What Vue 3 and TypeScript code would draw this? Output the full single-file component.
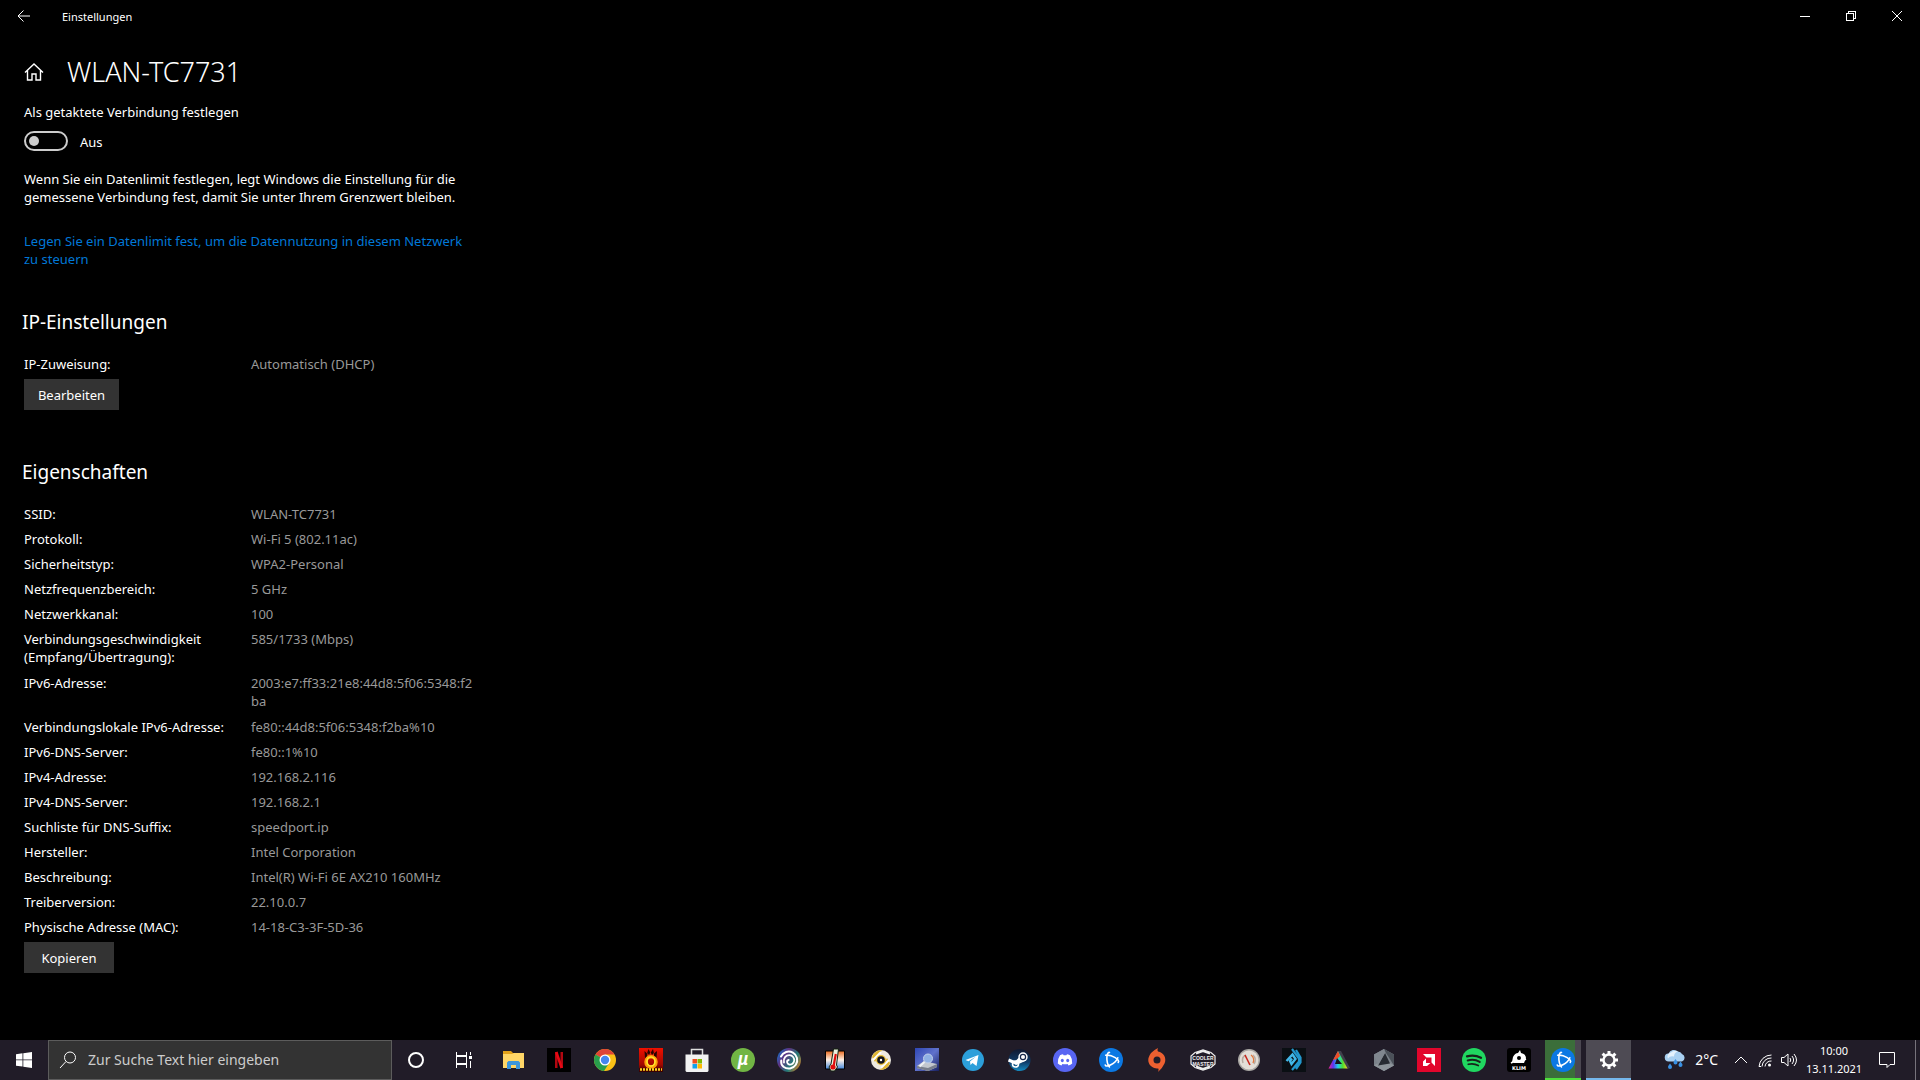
<script setup lang="ts">
import { ref } from 'vue'

interface Property {
  label: string
  value: string
  tall?: boolean
}

const metered = ref(false)
const query = ref('')

const properties: Property[] = [
  { label: 'SSID:', value: 'WLAN-TC7731' },
  { label: 'Protokoll:', value: 'Wi-Fi 5 (802.11ac)' },
  { label: 'Sicherheitstyp:', value: 'WPA2-Personal' },
  { label: 'Netzfrequenzbereich:', value: '5 GHz' },
  { label: 'Netzwerkkanal:', value: '100' },
  { label: 'Verbindungsgeschwindigkeit (Empfang/Übertragung):', value: '585/1733 (Mbps)', tall: true },
  { label: 'IPv6-Adresse:', value: '2003:e7:ff33:21e8:44d8:5f06:5348:f2ba', tall: true },
  { label: 'Verbindungslokale IPv6-Adresse:', value: 'fe80::44d8:5f06:5348:f2ba%10' },
  { label: 'IPv6-DNS-Server:', value: 'fe80::1%10' },
  { label: 'IPv4-Adresse:', value: '192.168.2.116' },
  { label: 'IPv4-DNS-Server:', value: '192.168.2.1' },
  { label: 'Suchliste für DNS-Suffix:', value: 'speedport.ip' },
  { label: 'Hersteller:', value: 'Intel Corporation' },
  { label: 'Beschreibung:', value: 'Intel(R) Wi-Fi 6E AX210 160MHz' },
  { label: 'Treiberversion:', value: '22.10.0.7' },
  { label: 'Physische Adresse (MAC):', value: '14-18-C3-3F-5D-36' },
]
</script>

<template>
  <div class="screen">
    <header class="titlebar">
      <button class="back" aria-label="Zurück">
        <svg width="14" height="14" viewBox="0 0 14 14" class="line"><path d="M13 7H1.500M6.500 1.500 1 7l5.500 5.500" /></svg>
      </button>
      <span class="app-name">Einstellungen</span>
      <div class="window-controls">
        <button aria-label="Minimieren">
          <svg width="10" height="10" viewBox="0 0 10 10" class="line crisp"><path d="M0 5.500h10" /></svg>
        </button>
        <button aria-label="Verkleinern">
          <svg width="10" height="10" viewBox="0 0 10 10" class="line crisp"><path d="M.5 2.500h7v7h-7zM2.500 2.500v-2h7v7h-2" /></svg>
        </button>
        <button aria-label="Schließen">
          <svg width="10" height="10" viewBox="0 0 10 10" class="line"><path d="M0 0 10 10M10 0 0 10" /></svg>
        </button>
      </div>
    </header>

    <main class="content">
      <div class="page-title">
        <button class="home" aria-label="Startseite">
          <svg width="20" height="20" viewBox="0 0 20 20" class="line home-icon"><path d="M1 10.500 10 2l9 8.500M3.500 8.500v9.500H8v-6h4v6h4.500V8.500" /></svg>
        </button>
        <h1>WLAN-TC7731</h1>
      </div>

      <p class="metered-label" id="metered-label">Als getaktete Verbindung festlegen</p>
      <label class="toggle">
        <input v-model="metered" type="checkbox" role="switch" aria-labelledby="metered-label" />
        <span>{{ metered ? 'Ein' : 'Aus' }}</span>
      </label>
      <p class="hint">Wenn Sie ein Datenlimit festlegen, legt Windows die Einstellung für die gemessene Verbindung fest, damit Sie unter Ihrem Grenzwert bleiben.</p>
      <a class="limit-link" href="#">Legen Sie ein Datenlimit fest, um die Datennutzung in diesem Netzwerk zu steuern</a>

      <section>
        <h2>IP-Einstellungen</h2>
        <table>
          <tbody>
            <tr>
              <th scope="row">IP-Zuweisung:</th>
              <td>Automatisch (DHCP)</td>
            </tr>
          </tbody>
        </table>
        <button class="action edit">Bearbeiten</button>
      </section>

      <section>
        <h2>Eigenschaften</h2>
        <table>
          <tbody>
            <tr v-for="p in properties" :key="p.label" :class="{ tall: p.tall }">
              <th scope="row">{{ p.label }}</th>
              <td>{{ p.value }}</td>
            </tr>
          </tbody>
        </table>
        <button class="action copy">Kopieren</button>
      </section>
    </main>

    <footer class="taskbar">
      <button class="system" aria-label="Start">
        <svg width="16" height="16" viewBox="0 0 16 16" fill="#fff"><path d="M0 2.200 6.500 1.300v6.200H0zM7.300 1.200 16 0v7.500H7.300zM0 8.300h6.500v6.200L0 13.700zM7.300 8.300H16V16l-8.700-1.200z" /></svg>
      </button>
      <label class="search">
        <svg width="18" height="18" viewBox="0 0 18 18" class="line"><circle cx="11" cy="6.500" r="5.500" /><path d="M7 10.500 1 17" /></svg>
        <input v-model="query" type="text" placeholder="Zur Suche Text hier eingeben" aria-label="Suche" />
      </label>
      <button class="system" aria-label="Cortana">
        <svg width="18" height="18" viewBox="0 0 18 18" fill="none" stroke="#fff" stroke-width="2"><circle cx="9" cy="9" r="7" /></svg>
      </button>
      <button class="system" aria-label="Aktive Anwendungen">
        <svg width="18" height="18" viewBox="0 0 18 18" class="line crisp"><path d="M1.500 1v3.500h10V1M1.500 17v-3.500h10V17M1.500 5.500h10v7h-10zM15.500 1v3M15.500 10v7" /><path d="M14 5h3v3h-3z" fill="#fff" stroke="none" /></svg>
      </button>

      <nav class="apps" aria-label="Angeheftete Apps">
        <button class="app" aria-label="Explorer">
          <svg width="24" height="24" viewBox="0 0 24 24"><path d="M2 3h8l2 2h11v3H2z" fill="#e3a21a" /><path d="M2 6h9l2-1h10v15H2z" fill="#ffd667" /><path d="M6 21v-6.500L7.500 13h10l1.500 1.500V21h-4v-4h-5v4z" fill="#3c96dc" /></svg>
        </button>
        <button class="app" aria-label="Netflix">
          <svg width="24" height="24" viewBox="0 0 24 24"><path d="M0 0h24v24H0z" fill="#000" /><rect x="8" y="4" width="2.500" height="16" fill="#b20710" /><rect x="13.500" y="4" width="2.500" height="16" fill="#b20710" /><line x1="9.300" y1="4" x2="14.700" y2="20" stroke="#e50914" stroke-width="2.600" /></svg>
        </button>
        <button class="app" aria-label="Chrome">
          <svg width="24" height="24" viewBox="0 0 24 24"><circle cx="12" cy="12" r="11" fill="#fbc116" /><path d="M12 12 2.500 6.500A11 11 0 0 1 21.500 6.500H12z" fill="#df4436" /><path d="M2.500 6.500A11 11 0 0 0 11 23l5.500-8.500L12 12z" fill="#289e4c" /><circle cx="12" cy="12" r="5.500" fill="#fff" /><circle cx="12" cy="12" r="4.200" fill="#4586ef" /></svg>
        </button>
        <button class="app" aria-label="FurMark">
          <svg width="24" height="24" viewBox="0 0 24 24">
            <defs><linearGradient id="fire" x1="0" y1="0" x2="0" y2="1"><stop offset="0" stop-color="#f01000" /><stop offset=".7" stop-color="#a00800" /><stop offset="1" stop-color="#300" /></linearGradient></defs>
            <path d="M0 0h24v24H0z" fill="url(#fire)" /><path d="M6 10 5.500 3 8 5.500 9.500 1l2 4L14 1l1 4.500L18 3l-.5 7-3-1H9z" fill="#2a0500" /><path d="m8 9 .5-4 1.500 2L11.500 4l1.500 3 2-2v4z" fill="#e52a08" /><ellipse cx="12" cy="14" rx="5" ry="5.200" fill="none" stroke="#ff9d0a" stroke-width="3.500" /><ellipse cx="12" cy="13.500" rx="4" ry="4.500" fill="none" stroke="#ffe52e" stroke-width="1.600" /><path d="M1 21.500h22" stroke="#ffd51e" stroke-width="2.500" stroke-dasharray="2 1" /><path d="M0 21h24" stroke="#1b0400" stroke-dasharray="1 2" />
          </svg>
        </button>
        <button class="app" aria-label="Microsoft Store">
          <svg width="24" height="24" viewBox="0 0 24 24"><path d="M6.500 7V1.500h11V7" fill="none" stroke="#ddd" stroke-width="1.500" /><path d="M.5 6.500h23V23l-1 1h-21l-1-1z" fill="#f2f2f2" /><path d="M7.500 11H12v4.500H7.500z" fill="#f04e1f" /><path d="M12.500 11H17v4.500h-4.500z" fill="#7eb900" /><path d="M7.500 16H12v4.500H7.500z" fill="#0fa2ec" /><path d="M12.500 16H17v4.500h-4.500z" fill="#fdb900" /></svg>
        </button>
        <button class="app" aria-label="µTorrent">
          <svg width="24" height="24" viewBox="0 0 24 24"><circle cx="12" cy="12" r="12" fill="#71b544" /><text x="12" y="17" class="mu-mark">µ</text></svg>
        </button>
        <button class="app" aria-label="Ubisoft Connect">
          <svg width="24" height="24" viewBox="0 0 24 24">
            <defs><linearGradient id="ubi" x1="0" y1=".2" x2="1" y2=".8"><stop offset="0" stop-color="#1670c8" /><stop offset=".3" stop-color="#613281" /><stop offset=".65" stop-color="#227c79" /><stop offset="1" stop-color="#d87b24" /></linearGradient></defs>
            <circle cx="12" cy="12" r="12" fill="url(#ubi)" /><g fill="none" stroke="#fff" stroke-linecap="round"><path d="M4 8.500A8.500 8.500 0 1 1 6.500 18.800C4.500 17 4 14 4.300 12.500" stroke-width="2" /><path d="M7 14.500C6 10 9 7 12.500 7.200c3 .2 5 2.700 4.700 5.500-.3 2.500-2.500 4.300-5 3.800-2.500-.6-3-4-.5-4.500" stroke-width="1.800" /></g>
          </svg>
        </button>
        <button class="app" aria-label="Core Temp">
          <svg width="24" height="24" viewBox="0 0 24 24">
            <defs><linearGradient id="heat" x1="0" y1="0" x2="0" y2="1"><stop offset="0" stop-color="#e9681c" /><stop offset=".5" stop-color="#fff1e5" /><stop offset="1" stop-color="#4387dc" /></linearGradient></defs>
            <path d="M2.500 3h19v18h-19z" fill="url(#heat)" stroke="#000" /><path d="M10.500 1h5l-2 16 1 2-3 4H8l-2-4 2-3z" fill="#e9f0dd" stroke="#14200f" /><path d="m12.800 6-2 11" stroke="#e00d0d" stroke-width="2.200" /><circle cx="10" cy="19" r="2.600" fill="#e00d0d" />
          </svg>
        </button>
        <button class="app" aria-label="Disc">
          <svg width="24" height="24" viewBox="0 0 24 24"><circle cx="12" cy="12" r="10" fill="#eeeae0" /><path d="M3 9a10 10 0 0 1 10-7l-3 5-4 7M21 15a10 10 0 0 1-10 7l3-5 4-7" fill="#dfb532" /><path d="m4 12 8-8M12 20l8-8" stroke="#fff" stroke-width="2" /><circle cx="12" cy="12" r="5" fill="#e7bd36" /><circle cx="12" cy="12" r="3.800" fill="#12141c" /><circle cx="12" cy="12" r="1.200" fill="#fff" /></svg>
        </button>
        <button class="app" aria-label="CrystalDiskInfo">
          <svg width="24" height="24" viewBox="0 0 24 24">
            <defs><linearGradient id="disk" x1="0" y1="0" x2="1" y2="1"><stop offset="0" stop-color="#2e46b4" /><stop offset=".5" stop-color="#6072cc" /><stop offset="1" stop-color="#18205f" /></linearGradient></defs>
            <path d="M0 0h24v23H0z" fill="url(#disk)" /><path d="m2 18 7-5 13 3v3l-9 4-11-3z" fill="#c2c7ce" /><path d="m2 18 11 2 9-4v3l-9 4-11-3z" fill="#787e8c" /><circle cx="13" cy="10.500" r="4.500" fill="#8fb0e4" stroke="#c3d0ea" /><path d="m9.500 14-5 4.500" stroke="#edf0f4" stroke-width="2" />
          </svg>
        </button>
        <button class="app" aria-label="Telegram">
          <svg width="24" height="24" viewBox="0 0 24 24"><circle cx="12" cy="12" r="11" fill="#2c9fda" /><path d="m4.500 12 13-5-2 11-4-3-2 2-.5-3.500 6-5-7.500 4.700z" fill="#fff" /></svg>
        </button>
        <button class="app" aria-label="Steam">
          <svg width="24" height="24" viewBox="0 0 24 24">
            <defs><linearGradient id="steam" x1="0" y1="0" x2="0" y2="1"><stop offset="0" stop-color="#10182f" /><stop offset=".6" stop-color="#103c68" /><stop offset="1" stop-color="#148bc2" /></linearGradient></defs>
            <circle cx="12.500" cy="12" r="11" fill="url(#steam)" /><path d="m1.500 12 7 3 6-6M8 16l9-4" fill="none" stroke="#fff" stroke-width="3" /><circle cx="16" cy="9" r="4.700" fill="#fff" /><circle cx="16" cy="9" r="2.600" fill="#fff" stroke="#16284a" stroke-width="1.200" /><circle cx="8.500" cy="16" r="3" fill="none" stroke="#fff" stroke-width="1.600" />
          </svg>
        </button>
        <button class="app" aria-label="Discord">
          <svg width="24" height="24" viewBox="0 0 24 24"><circle cx="12" cy="12" r="12" fill="#5865f2" /><path d="M7 7.300Q9 6.200 10 6.200l.6 1h2.800l.6-1q1 0 3 1.100Q19.600 11 19.200 15.500q-1.700 1.500-3.700 1.900l-.9-1.500q-2.600.7-5.200 0l-.9 1.500q-2-.4-3.700-1.900Q4.400 11 7 7.300" fill="#fff" /><ellipse cx="9.300" cy="12.500" rx="1.500" ry="1.700" fill="#5865f2" /><ellipse cx="14.700" cy="12.500" rx="1.500" ry="1.700" fill="#5865f2" /></svg>
        </button>
        <button class="app" aria-label="Battle.net">
          <svg width="24" height="24" viewBox="0 0 24 24">
            <defs>
              <path id="bnet-arm" d="M10.500 4.500C7.500 3.500 6.500 14 10.500 19" fill="none" stroke="#fff" stroke-width="1.600" stroke-linecap="round" />
              <g id="bnet"><circle cx="12" cy="12" r="12" fill="#0b78e3" /><use href="#bnet-arm" /><use href="#bnet-arm" transform="rotate(120 12 12)" /><use href="#bnet-arm" transform="rotate(240 12 12)" /></g>
            </defs>
            <use href="#bnet" />
          </svg>
        </button>
        <button class="app" aria-label="Origin">
          <svg width="24" height="24" viewBox="0 0 24 24"><path d="M13 0q-1 2 0 3.500a8.500 8.500 0 0 1 6.500 12Q17 21 13 24q1-2 .3-3.500A8.700 8.700 0 0 1 3.500 10Q5 4 13 0" fill="#ed6030" /><circle cx="12" cy="12" r="3.500" fill="#211c28" /></svg>
        </button>
        <button class="app" aria-label="Cooler Master">
          <svg width="26" height="24" viewBox="0 0 26 24"><path d="M5 4.500 13 2l8 2.500L25 8v8l-4 3.500L13 22l-8-2.500L1 16V8z" fill="#211c28" stroke="#eee" stroke-width="1.200" /><path d="M6 5.500 13 3l7 2.500M6 18.500l7 2.500 7-2.500" fill="none" stroke="#eee" stroke-width="2" /><text x="13" y="11.500" class="cm-mark">COOLER</text><text x="13" y="17.500" class="cm-mark">MASTER</text></svg>
        </button>
        <button class="app narrow" aria-label="Monitor">
          <svg width="24" height="24" viewBox="0 0 24 24"><circle cx="12" cy="12" r="11" fill="#aaa8a4" /><circle cx="12" cy="12" r="9.500" fill="#e3ded7" /><path d="M6 15q-2-6 3-8M17 16q3-5-1-9" fill="none" stroke="#b7aaa0" stroke-width="1.500" /><path d="m8 7 5 10" stroke="#c8281e" stroke-width="1.600" /><path d="M14 7q4 3 2 8" fill="none" stroke="#e0763a" stroke-width="1.200" /></svg>
        </button>
        <button class="app narrow" aria-label="Game Center">
          <svg width="24" height="24" viewBox="0 0 24 24"><path d="M0 0h24v24H0z" fill="#0a0f13" /><path d="m10 1 7 9.500v3L10 22M14 2l4.500 7.500v5L14 21" fill="none" stroke="#2297cd" stroke-width="2.200" /><path d="m4.500 13 6-6.500 3 4.500-4 5-1.500-3 2-2.500" fill="none" stroke="#42b8e8" stroke-width="2.400" /></svg>
        </button>
        <button class="app narrow" aria-label="Farbprofil">
          <svg width="24" height="24" viewBox="0 0 24 24">
            <defs><linearGradient id="rainbow"><stop offset="0" stop-color="#f0208c" /><stop offset=".25" stop-color="#5a35f4" /><stop offset=".5" stop-color="#1fd3e6" /><stop offset=".75" stop-color="#4ddf31" /><stop offset="1" stop-color="#f6d81c" /></linearGradient></defs>
            <path d="m11 3 3 0 9 17-3 1z" fill="#41404c" /><path d="M11 3 1.500 20.500h19z" fill="url(#rainbow)" /><path d="M11 3 6 12l4-1 3-3z" fill="#ef4d26" /><path d="m10 10 5 6H8z" fill="#16141d" />
          </svg>
        </button>
        <button class="app narrow" aria-label="Benchmark">
          <svg width="24" height="24" viewBox="0 0 24 24"><path d="m12 1 10 5.500v11L12 23 2 17.500v-11z" fill="#7b828a" /><path d="m12 1 10 5.500v11L14 5z" fill="#4b5159" /><path d="m2 17.500 10 5.500 10-5.500-4-2.500H6z" fill="#8d949a" /><path d="m13 5 5 10.500L6 17.500z" fill="#272b32" /><path d="M13 5 6 17.500 2 6.500 12 1z" fill="#80878f" /></svg>
        </button>
        <button class="app narrow" aria-label="AMD Radeon">
          <svg width="24" height="24" viewBox="0 0 24 24"><path d="M0 0h24v24H0z" fill="#e2062c" /><path d="M6 6h12v12l-3.500-3.500v-5h-5z" fill="#fff" /><path d="M9 10.500V15h4.500L10 18H6v-4.500z" fill="#fff" /></svg>
        </button>
        <button class="app narrow" aria-label="Spotify">
          <svg width="24" height="24" viewBox="0 0 24 24"><circle cx="12" cy="12" r="12" fill="#20d760" /><g fill="none" stroke="#17231b" stroke-linecap="round"><path d="M5 8.300q7.500-2 14 1.500" stroke-width="2.300" /><path d="M5.700 12.500q6.500-1.800 12 1.400" stroke-width="2" /><path d="M6.300 16.300q5.300-1.400 10 1.200" stroke-width="1.700" /></g></svg>
        </button>
        <button class="app narrow" aria-label="KLIM">
          <svg width="24" height="24" viewBox="0 0 24 24"><rect width="24" height="24" rx="3" fill="#000" /><path d="m13 2 1 3q5 1 5 5l-2 5H7l-2-1 1-5q2-4 5-4z" fill="#fff" /><circle cx="12" cy="10" r="2" fill="#000" /><path d="m4 15 4-2M13 14l6-3" stroke="#fff" stroke-width="1.600" /><text x="12" y="22" class="klim-mark">KLIM</text></svg>
        </button>
        <button class="app narrow alert" aria-label="Battle.net, aktiv">
          <svg width="24" height="24" viewBox="0 0 24 24"><use href="#bnet" /></svg>
        </button>
        <button class="app narrow active" aria-label="Einstellungen">
          <svg width="20" height="20" viewBox="0 0 20 20"><circle cx="10" cy="10" r="5.500" fill="none" stroke="#fff" stroke-width="2.400" /><path d="M10 1v3M10 16v3M1 10h3M16 10h3M3.600 3.600l2.200 2.200M14.200 14.200l2.200 2.200M3.600 16.400l2.200-2.200M14.200 5.800l2.200-2.200" stroke="#fff" stroke-width="3" /></svg>
        </button>
      </nav>

      <div class="tray">
        <button class="weather">
          <svg width="22" height="22" viewBox="0 0 22 22"><path d="M5 12.500a4 4 0 0 1-.5-8A6 6 0 0 1 14 2.500a5 5 0 0 1 4 2.500 4 4 0 0 1 0 7.500z" fill="#a9d0f2" /><path d="M4 9.500a4 4 0 0 1 3-6 6 6 0 0 1 7-1q-4 1-4 5-4-1-6 2" fill="#e4f1fd" /><g fill="#3a91e4"><path d="M11.500 10q2 2.600 2 3.500a2 2 0 0 1-4 0q0-.9 2-3.500M6 14.500q2 2.500 2 3.500a2 2 0 0 1-4 0q0-1 2-3.500M16.500 12.500q2 2.500 2 3.500a2 2 0 0 1-4 0q0-1 2-3.500" /></g></svg>
          <span>2°C</span>
        </button>
        <button class="tray-icon" aria-label="Ausgeblendete Symbole">
          <svg width="14" height="14" viewBox="0 0 14 14" class="line"><path d="m1 10 6-6 6 6" /></svg>
        </button>
        <button class="tray-icon" aria-label="WLAN">
          <svg width="14" height="14" viewBox="0 0 14 14" class="line"><path d="M1 13.500A12.500 12.500 0 0 1 13.500 2M4 13.500A9 9 0 0 1 13.500 5M7 13.500A6 6 0 0 1 13.500 8" /><path d="M1 13.500h2" /><circle cx="11.500" cy="12" r="1.500" fill="#fff" stroke="none" /></svg>
        </button>
        <button class="tray-icon" aria-label="Lautstärke">
          <svg width="18" height="16" viewBox="0 0 18 16" class="line"><path d="M1.500 5.500H4l4-3.500v12l-4-3.500H1.500zM10 6q1.500 2 0 4M12 4q3.200 4 0 8M14 2q5 6 0 12" /></svg>
        </button>
        <button class="clock">
          <span>10:00</span>
          <span>13.11.2021</span>
        </button>
        <button class="notifications" aria-label="Benachrichtigungen">
          <svg width="18" height="18" viewBox="0 0 18 18" class="line"><path d="M1.500 1.500h15v12H12l-3 3v-3H1.500z" /></svg>
        </button>
        <button class="show-desktop" aria-label="Desktop anzeigen"></button>
      </div>
    </footer>
  </div>
</template>

<style>
body {
  margin: 0;
  background: #000;
}
</style>

<style scoped>
.screen {
  display: flex;
  flex-direction: column;
  min-height: 100vh;
  background: #000;
  color: #fff;
  font-family: "Noto Sans", "Open Sans", sans-serif;
  font-size: 13px;
  line-height: 18px;
}

button {
  display: flex;
  align-items: center;
  justify-content: center;
  padding: 0;
  border: 0;
  background: none;
  color: inherit;
  font: inherit;
}

svg {
  display: block;
  flex: none;
}

.line {
  fill: none;
  stroke: #fff;
  stroke-width: 1;
}

.crisp {
  shape-rendering: crispEdges;
}

.titlebar {
  display: flex;
  align-items: center;
  height: 32px;
}

.back {
  width: 48px;
  height: 32px;
}

.app-name {
  margin-left: 14px;
  padding-top: 2px;
  font-size: 11px;
}

.window-controls {
  display: flex;
  margin-left: auto;
}

.window-controls button {
  width: 46px;
  height: 32px;
}

.content {
  flex: 1;
  width: 454px;
  padding: 20px 24px 0;
}

.page-title {
  display: flex;
  align-items: center;
  height: 40px;
}

.home {
  width: 20px;
  height: 20px;
}

.home-icon {
  stroke-width: 1.4;
}

h1 {
  margin: 0 0 0 23px;
  font-size: 27px;
  line-height: 40px;
  font-weight: 300;
}

p {
  margin: 0;
}

.metered-label {
  margin-top: 11px;
}

.toggle {
  display: flex;
  align-items: center;
  gap: 12px;
  width: max-content;
  height: 20px;
  margin-top: 10px;
}

.toggle span {
  padding-top: 2px;
}

.toggle input {
  appearance: none;
  width: 44px;
  height: 20px;
  margin: 0;
  padding: 3px;
  border: 2px solid #ccc;
  border-radius: 10px;
  box-sizing: border-box;
}

.toggle input::before {
  content: "";
  display: block;
  width: 10px;
  height: 10px;
  border-radius: 50%;
  background: #ccc;
}

.toggle input:checked::before {
  margin-left: auto;
}

.hint {
  margin-top: 19px;
}

.limit-link {
  display: block;
  margin-top: 26px;
  color: #0078d7;
  text-decoration: none;
}

h2 {
  margin: 0 0 0 -2px;
  font-size: 19px;
  line-height: 28px;
  font-weight: 400;
}

section {
  margin-top: 40px;
}

section + section {
  margin-top: 48px;
}

table {
  width: 100%;
  margin-top: 18px;
  border-collapse: collapse;
  table-layout: fixed;
}

tr {
  height: 25px;
}

tr.tall {
  height: 44px;
}

th,
td {
  padding: 1px 0 0;
  vertical-align: top;
  text-align: left;
  font-weight: 400;
}

th {
  width: 227px;
}

td {
  color: #999;
  word-break: break-all;
}

.action {
  height: 31px;
  background: #333;
}

.edit {
  width: 95px;
}

.copy {
  width: 90px;
}

.taskbar {
  display: flex;
  height: 40px;
  background: #211c28;
}

.system {
  width: 48px;
}

.search {
  display: flex;
  align-items: center;
  gap: 11px;
  width: 344px;
  padding: 0 10px;
  border: 1px solid #5c5c5c;
  box-sizing: border-box;
  background: #333;
}

.search input {
  flex: 1;
  min-width: 0;
  padding: 0;
  border: 0;
  outline: 0;
  background: none;
  color: #fff;
  font: inherit;
  font-size: 14px;
}

.search input::placeholder {
  color: #ccc;
  opacity: 1;
}

.apps {
  display: flex;
  margin-left: 2px;
}

.app {
  width: 46px;
}

.narrow {
  width: 45px;
}

.alert {
  border-bottom: 2px solid #4fe03c;
  padding-top: 2px;
  margin-left: 4px;
  margin-right: 5px;
  width: 36px;
  background: linear-gradient(to right, #3b6e3a 30px, #4b4751 30px);
}

.active {
  border-bottom: 2px solid #76b9ed;
  padding-top: 2px;
  background: #4e4b54;
}

.mu-mark {
  fill: #fff;
  font: italic 700 18px "Liberation Sans", sans-serif;
  text-anchor: middle;
}

.cm-mark {
  fill: #eee;
  font: 700 5px "Liberation Sans", sans-serif;
  text-anchor: middle;
}

.klim-mark {
  fill: #fff;
  font: 700 5px "DejaVu Sans", sans-serif;
  text-anchor: middle;
}

.tray {
  display: flex;
  margin-left: auto;
}

.weather {
  gap: 9px;
  margin-right: 11px;
  font-size: 14px;
}

.tray-icon {
  width: 24px;
}

.clock {
  flex-direction: column;
  width: 66px;
  font-size: 11px;
}

.notifications {
  width: 40px;
}

.show-desktop {
  width: 5px;
  margin-left: 8px;
  border-left: 1px solid #77737c;
}
</style>
